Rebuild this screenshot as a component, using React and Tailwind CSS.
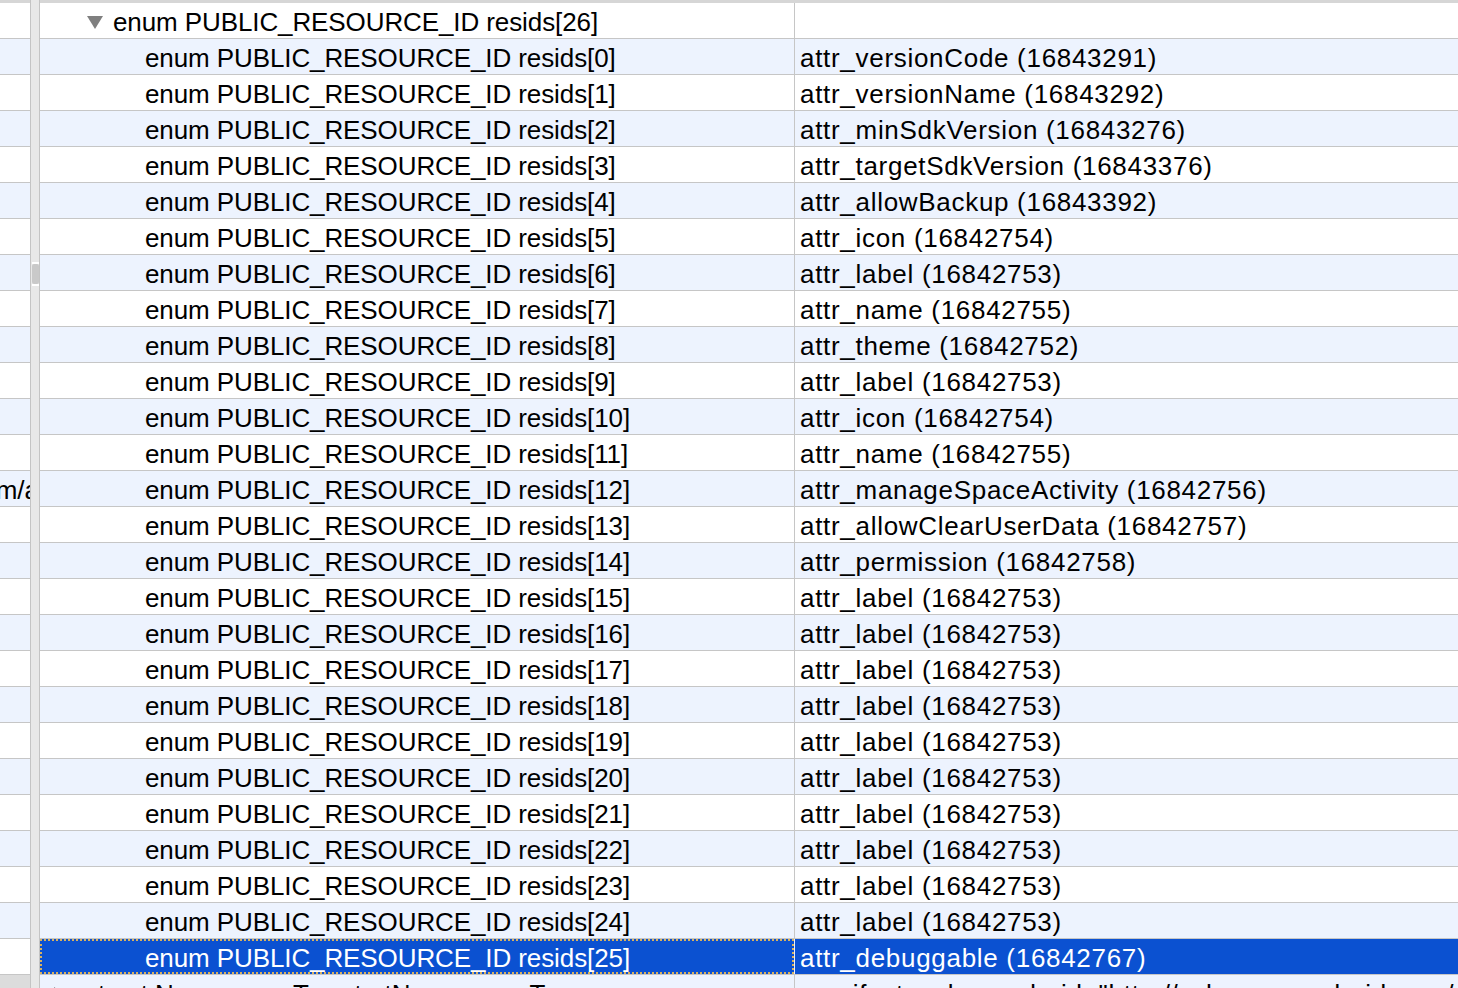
const values = [
  'attr_versionCode (16843291)',
  'attr_versionName (16843292)',
  'attr_minSdkVersion (16843276)',
  'attr_targetSdkVersion (16843376)',
  'attr_allowBackup (16843392)',
  'attr_icon (16842754)',
  'attr_label (16842753)',
  'attr_name (16842755)',
  'attr_theme (16842752)',
  'attr_label (16842753)',
  'attr_icon (16842754)',
  'attr_name (16842755)',
  'attr_manageSpaceActivity (16842756)',
  'attr_allowClearUserData (16842757)',
  'attr_permission (16842758)',
  'attr_label (16842753)',
  'attr_label (16842753)',
  'attr_label (16842753)',
  'attr_label (16842753)',
  'attr_label (16842753)',
  'attr_label (16842753)',
  'attr_label (16842753)',
  'attr_label (16842753)',
  'attr_label (16842753)',
  'attr_label (16842753)',
  'attr_debuggable (16842767)',
];

function DownArrow() {
  return (
    <svg width="18" height="16" viewBox="0 0 18 16" className="shrink-0">
      <polygon points="1,2 17,2 9,15" fill="#7f7f7f" />
    </svg>
  );
}

function RightArrow() {
  return (
    <svg width="12" height="16" viewBox="0 0 12 16" className="shrink-0">
      <polygon points="1,1 11,8 1,15" fill="#7f7f7f" />
    </svg>
  );
}

function LeftPane() {
  const rows = Array.from({ length: 27 });
  return (
    <div className="w-[30px] shrink-0 flex flex-col overflow-hidden">
      <div className="h-[3px] bg-[#d6d6d6] shrink-0" />
      {rows.map((_, i) => (
        <div
          key={i}
          className={`h-[36px] shrink-0 border-b border-[#c6c6c6] flex items-center justify-end overflow-hidden pt-[3px] ${i % 2 ? 'bg-[#edf3fe]' : 'bg-white'}`}
        >
          {i === 13 && <span className="whitespace-nowrap -mr-[9px]">m/a</span>}
        </div>
      ))}
      <div className="flex-1 bg-[#dcdcdc]" />
    </div>
  );
}

function Splitter() {
  return (
    <div className="w-[10px] shrink-0 bg-[#e8e8e8] border-l border-r border-[#c4c4c4] flex flex-col items-center pt-[262px]">
      <div className="w-[7px] h-[2px] bg-white" />
      <div className="w-[7px] h-[20px] bg-[#c9c9c9] rounded-[2px]" />
      <div className="w-[7px] h-[2px] bg-white" />
    </div>
  );
}

function Row({ left, right, indent, arrow, stripe, selected }) {
  const bg = selected ? 'bg-[#0b51d1] text-white' : stripe ? 'bg-[#edf3fe]' : 'bg-white';
  return (
    <div className={`h-[36px] shrink-0 flex border-b border-[#c6c6c6] ${bg}`}>
      <div
        className={`w-[754px] shrink-0 flex items-center pt-[3px] whitespace-nowrap overflow-hidden ${selected ? 'outline-2 outline-dotted outline-[#d9b25e] -outline-offset-2' : ''}`}
      >
        <div className={`flex items-center tracking-[-0.1px] ${indent}`}>
          {arrow}
          <span>{left}</span>
        </div>
      </div>
      <div className={`w-px shrink-0 ${selected ? 'bg-[#e8eefa]' : 'bg-[#c6c6c6]'}`} />
      <div className="flex-1 flex items-center pt-[3px] pl-[5px] tracking-[0.7px] whitespace-nowrap overflow-hidden">
        {right}
      </div>
    </div>
  );
}

export default function App() {
  return (
    <div
      className="w-[1458px] h-[988px] overflow-hidden flex bg-white text-black text-[26px] leading-none"
      style={{ fontFamily: '"Liberation Sans", Arial, sans-serif' }}
    >
      <LeftPane />
      <Splitter />
      <div className="flex-1 flex flex-col overflow-hidden">
        <div className="h-[3px] bg-[#d6d6d6] shrink-0" />
        <Row
          left="enum PUBLIC_RESOURCE_ID resids[26]"
          right=""
          indent="pl-[46px] gap-[9px]"
          arrow={<DownArrow />}
        />
        {values.map((v, i) => (
          <Row
            key={i}
            left={`enum PUBLIC_RESOURCE_ID resids[${i}]`}
            right={v}
            indent="pl-[105px]"
            stripe={i % 2 === 0}
            selected={i === 25}
          />
        ))}
        <Row
          left="struct NamespaceTag startNamespaceTag"
          right={'manifest xmlns:android="http://schemas.android.com/apk/res/android"'}
          indent="pl-[13px] gap-[20px]"
          arrow={<RightArrow />}
          stripe
        />
      </div>
    </div>
  );
}
